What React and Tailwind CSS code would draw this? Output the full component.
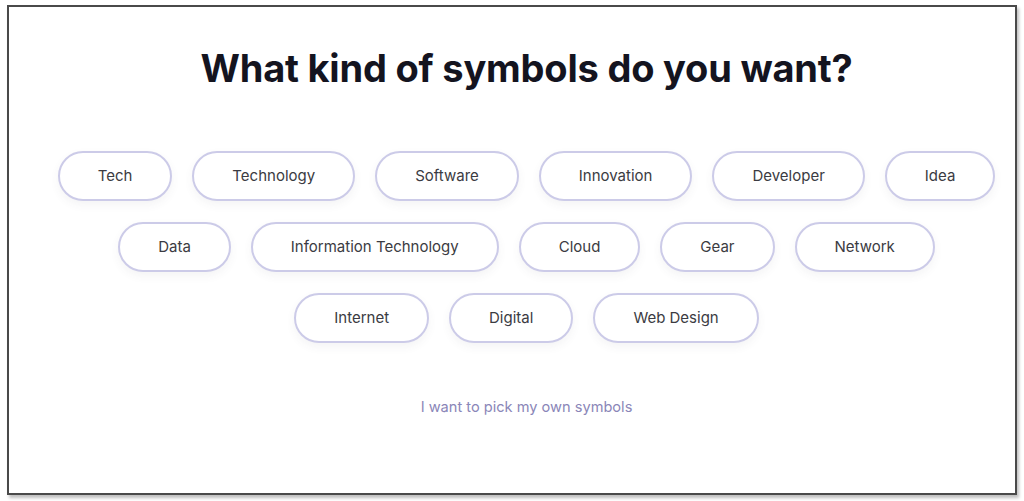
import React from 'react';

const rows = [
  ['Tech', 'Technology', 'Software', 'Innovation', 'Developer', 'Idea'],
  ['Data', 'Information Technology', 'Cloud', 'Gear', 'Network'],
  ['Internet', 'Digital', 'Web Design'],
];

function Pill({ label }) {
  return (
    <button className="h-[50px] px-[38px] rounded-full border-2 border-[#cccbe8] bg-white text-[15px] text-[#3b3b42] shadow-[0_4px_10px_rgba(60,60,90,0.06)]">
      {label}
    </button>
  );
}

export default function App() {
  return (
    <div className="w-[1024px] h-[501px] bg-white pt-[5px] pl-[7px]" style={{ fontFamily: 'Inter, "Noto Sans", sans-serif' }}>
      <div className="w-[1010px] h-[490px] border-2 border-[#4a4a4a] bg-white shadow-[2px_3px_3px_rgba(0,0,0,0.25)] pl-[29px] pt-[38px]">
        <h1 className="text-center text-[38px] font-bold text-[#14141f] tracking-[-0.2px] leading-[46px]">
          What kind of symbols do you want?
        </h1>
        <div className="mt-[60px] flex flex-col gap-[21px]">
          {rows.map((row, i) => (
            <div key={i} className="flex justify-center gap-[20px]">
              {row.map((label) => (
                <Pill key={label} label={label} />
              ))}
            </div>
          ))}
        </div>
        <div className="mt-[51px] text-center">
          <a className="text-[14.6px] text-[#8a86b8]">I want to pick my own symbols</a>
        </div>
      </div>
    </div>
  );
}
